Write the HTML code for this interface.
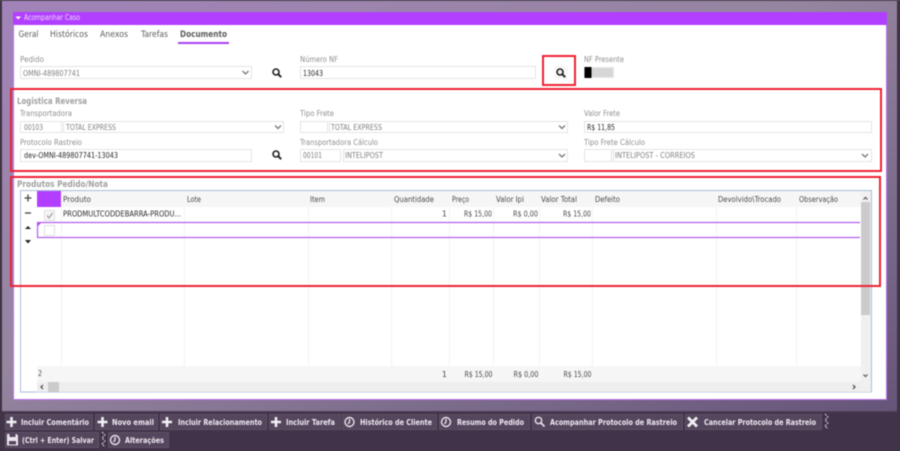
<!DOCTYPE html>
<html lang="pt">
<head>
<meta charset="utf-8">
<title>Acompanhar Caso</title>
<style>
html,body{margin:0;padding:0;width:900px;height:451px;overflow:hidden;background:#3f3345}
svg{display:block;filter:blur(.45px)}
text{font-family:"DejaVu Sans","Liberation Sans",sans-serif;font-size:8px;fill:#8c8c8c;white-space:pre}
.lb{fill:#8f8f8f}
.v{fill:#808080}
.d{fill:#2a2a2a}
.h{fill:#4a4a4a}
.t{fill:#5c5c5c;font-size:9px}
.b{fill:#a0a0a0;font-size:9px;font-weight:bold}
.w{fill:#efe9f2;font-weight:bold}
.in{fill:#fff;stroke:#e4e4e4}
.gl{stroke:#f3f3f3;stroke-width:1}
.btn{fill:#54465c;stroke:#5f5267}
.red{fill:none;stroke:#ee2233;stroke-width:2}
.ch{fill:none;stroke:#777;stroke-width:1.300}
.ic{fill:none;stroke:#e8e2ec;stroke-width:1.400}
.zz{fill:none;stroke:#d8d3dc;stroke-width:1;stroke-dasharray:2 1}
</style>
</head>
<body>
<svg width="900" height="451" viewBox="0 0 900 451" xmlns="http://www.w3.org/2000/svg">
<defs>
<linearGradient id="bg" x1="0" y1="0" x2="1" y2="1">
<stop offset="0" stop-color="#a283ba"/><stop offset=".45" stop-color="#95859f"/><stop offset="1" stop-color="#66557a"/>
</linearGradient>
<g id="s"><circle cx="-1" cy="-1" r="3" fill="none" stroke="#222" stroke-width="1.600"/><path d="M1.200 1.200L4.200 4.200" stroke="#222" stroke-width="2"/></g>
<path id="chev" class="ch" d="M-3-1.500L0 1.500L3-1.500"/>
<g id="plus"><path d="M-5 0H5M0-5V5" stroke="#f2eff4" stroke-width="2.600"/></g>
<g id="clock"><circle r="4.500" class="ic"/><path class="ic" d="M0-3V0L-1.500 2"/></g>
</defs>

<rect width="900" height="451" fill="#3f3345"/>
<rect x="2" y="1" width="895" height="411" fill="url(#bg)"/>
<rect y="0" width="900" height="1" fill="#5a5060"/>

<!-- panel -->
<rect x="13.500" y="12.500" width="873" height="387" fill="#fff" stroke="#bd72f0"/>
<rect x="13" y="12" width="874" height="13" fill="#b23fff"/>
<path d="M15.500 16.500H21L18.200 19.500Z" fill="#fff"/>
<text x="24" y="20" style="font-size:7.500px;fill:#ecdcfa" textLength="56" lengthAdjust="spacingAndGlyphs">Acompanhar Caso</text>

<!-- tabs -->
<text class="t" x="18.500" y="37" textLength="20" lengthAdjust="spacingAndGlyphs">Geral</text>
<text class="t" x="50" y="37" textLength="38" lengthAdjust="spacingAndGlyphs">Históricos</text>
<text class="t" x="100" y="37" textLength="28" lengthAdjust="spacingAndGlyphs">Anexos</text>
<text class="t" x="141" y="37" textLength="27" lengthAdjust="spacingAndGlyphs">Tarefas</text>
<text class="t" x="180" y="37" textLength="47" lengthAdjust="spacingAndGlyphs" style="font-weight:bold">Documento</text>
<rect x="178" y="42" width="51" height="2" fill="#a93ff0"/>

<!-- row 1 -->
<text class="lb" x="20" y="62" textLength="24" lengthAdjust="spacingAndGlyphs">Pedido</text>
<rect class="in" x="20.500" y="66.500" width="231" height="12"/>
<text class="v" x="23" y="76" textLength="57" lengthAdjust="spacingAndGlyphs">OMNI-489807741</text>
<use href="#chev" x="245.500" y="72.500"/>
<use href="#s" x="277" y="73"/>

<text class="lb" x="300" y="62" textLength="38" lengthAdjust="spacingAndGlyphs">Número NF</text>
<rect class="in" x="300.500" y="66.500" width="235" height="12"/>
<text class="d" x="303" y="76" textLength="20" lengthAdjust="spacingAndGlyphs">13043</text>

<rect x="555" y="66" width="13" height="13" fill="#f7f7f7"/>
<use href="#s" x="561" y="73"/>
<rect class="red" x="543" y="56" width="32" height="29"/>

<text class="lb" x="584" y="62" textLength="40" lengthAdjust="spacingAndGlyphs">NF Presente</text>
<rect x="584.500" y="67.500" width="29" height="10" fill="#d6d6d6" stroke="#e8e8e8"/>
<rect x="584.500" y="67" width="7" height="11" fill="#000"/>

<!-- logistica -->
<rect class="red" x="11" y="89" width="870" height="82"/>
<text class="b" x="17" y="104" textLength="70" lengthAdjust="spacingAndGlyphs">Logistica Reversa</text>

<text class="lb" x="20" y="116" textLength="52" lengthAdjust="spacingAndGlyphs">Transportadora</text>
<rect class="in" x="20.500" y="121.500" width="41" height="11"/>
<text class="v" x="24" y="130" textLength="19" lengthAdjust="spacingAndGlyphs">00103</text>
<rect class="in" x="63.500" y="121.500" width="220" height="11"/>
<text class="v" x="66" y="130" textLength="50" lengthAdjust="spacingAndGlyphs">TOTAL EXPRESS</text>
<use href="#chev" x="278" y="127"/>

<text class="lb" x="20" y="145" textLength="62" lengthAdjust="spacingAndGlyphs">Protocolo Rastreio</text>
<rect class="in" x="20.500" y="149.500" width="231" height="12"/>
<text class="d" x="24" y="158" textLength="94" lengthAdjust="spacingAndGlyphs">dev-OMNI-489807741-13043</text>
<use href="#s" x="277" y="155"/>

<text class="lb" x="300" y="116" textLength="34" lengthAdjust="spacingAndGlyphs">Tipo Frete</text>
<rect class="in" x="300.500" y="121.500" width="27" height="11"/>
<rect class="in" x="329.500" y="121.500" width="238" height="11"/>
<text class="v" x="331" y="130" textLength="51" lengthAdjust="spacingAndGlyphs">TOTAL EXPRESS</text>
<use href="#chev" x="562" y="127"/>

<text class="lb" x="300" y="145" textLength="78" lengthAdjust="spacingAndGlyphs">Transportadora Cálculo</text>
<rect class="in" x="300.500" y="149.500" width="40" height="12"/>
<text class="v" x="303" y="158" textLength="19" lengthAdjust="spacingAndGlyphs">00101</text>
<rect class="in" x="343.500" y="149.500" width="224" height="12"/>
<text class="v" x="345" y="158" textLength="38" lengthAdjust="spacingAndGlyphs">INTELIPOST</text>
<use href="#chev" x="562" y="155.500"/>

<text class="lb" x="584" y="116" textLength="36" lengthAdjust="spacingAndGlyphs">Valor Frete</text>
<rect class="in" x="584.500" y="121.500" width="287" height="11"/>
<text class="d" x="587" y="130" textLength="28" lengthAdjust="spacingAndGlyphs">R$ 11,85</text>

<text class="lb" x="584" y="145" textLength="61" lengthAdjust="spacingAndGlyphs">Tipo Frete Cálculo</text>
<rect class="in" x="584.500" y="149.500" width="27" height="12"/>
<rect class="in" x="613.500" y="149.500" width="258" height="12"/>
<text class="v" x="615" y="158" textLength="80" lengthAdjust="spacingAndGlyphs">INTELIPOST - CORREIOS</text>
<use href="#chev" x="865" y="155.500"/>

<!-- produtos -->
<text class="b" x="17" y="187" textLength="91" lengthAdjust="spacingAndGlyphs">Produtos Pedido/Nota</text>

<rect x="20.500" y="190.500" width="851" height="201.500" fill="#fff" stroke="#a9c0d8"/>
<rect x="37" y="191" width="824" height="16" fill="#f6f6f6"/>
<rect x="37" y="191" width="24" height="16" fill="#b23fff"/>

<path class="gl" d="M61.500 207V366M184.500 207V366M308.500 207V366M391.500 207V366M449.500 207V366M493.500 207V366M539.500 207V366M592.500 207V366M716.500 207V366M796.500 207V366"/>

<text class="h" x="63" y="202" textLength="28" lengthAdjust="spacingAndGlyphs">Produto</text>
<text class="h" x="187" y="202" textLength="14" lengthAdjust="spacingAndGlyphs">Lote</text>
<text class="h" x="310" y="202" textLength="15" lengthAdjust="spacingAndGlyphs">Item</text>
<text class="h" x="394" y="202" textLength="40" lengthAdjust="spacingAndGlyphs">Quantidade</text>
<text class="h" x="452" y="202" textLength="17" lengthAdjust="spacingAndGlyphs">Preço</text>
<text class="h" x="496" y="202" textLength="28" lengthAdjust="spacingAndGlyphs">Valor Ipi</text>
<text class="h" x="541" y="202" textLength="36" lengthAdjust="spacingAndGlyphs">Valor Total</text>
<text class="h" x="595" y="202" textLength="25" lengthAdjust="spacingAndGlyphs">Defeito</text>
<text class="h" x="718" y="202" textLength="63" lengthAdjust="spacingAndGlyphs">Devolvido\Trocado</text>
<text class="h" x="799" y="202" textLength="39" lengthAdjust="spacingAndGlyphs">Observação</text>

<text class="d" x="63" y="216.500" textLength="118" lengthAdjust="spacingAndGlyphs">PRODMULTCODDEBARRA-PRODU...</text>
<text class="h" x="447" y="216.500" text-anchor="end">1</text>
<text class="h" x="464" y="216.500" textLength="28" lengthAdjust="spacingAndGlyphs">R$ 15,00</text>
<text class="h" x="513" y="216.500" textLength="25" lengthAdjust="spacingAndGlyphs">R$ 0,00</text>
<text class="h" x="563" y="216.500" textLength="28" lengthAdjust="spacingAndGlyphs">R$ 15,00</text>

<rect x="44.500" y="210.500" width="10" height="10" fill="#f6f6f6" stroke="#e0e0e0"/>
<path d="M47 215.500L49 218L52.500 213" fill="none" stroke="#999" stroke-width="1.100"/>

<rect x="37.500" y="222.500" width="822" height="15" fill="#fff" stroke="none"/>
<path class="gl" d="M61.500 223V237M184.500 223V237M308.500 223V237M391.500 223V237M449.500 223V237M493.500 223V237M539.500 223V237M592.500 223V237M716.500 223V237M796.500 223V237"/>
<path d="M37 222.500H860M37 237.500H860M37.500 222V238" stroke="#b45ff0" stroke-width="1.200" fill="none"/>
<path d="M38 223H41L38 226Z" fill="#b23fff"/>
<rect x="44.500" y="225.500" width="10" height="10" fill="#fff" stroke="#e0e0e0"/>

<!-- left grid controls -->
<path d="M24.500 198H31.500M28 194.500V201.500" stroke="#444" stroke-width="1.300"/>
<path d="M25 213H31" stroke="#444" stroke-width="1.300"/>
<path d="M25 229H31L28 226Z" fill="#222"/>
<path d="M25 240H31L28 243.500Z" fill="#222"/>

<!-- scrollbars -->
<rect x="861" y="191" width="10" height="191" fill="#f0f0f0"/>
<rect x="861" y="202" width="9" height="113" fill="#cbcbcb"/>
<path d="M863.500 199.500L865.500 197.500L867.500 199.500" fill="none" stroke="#555" stroke-width="1.200"/>
<path d="M863.500 374.500L865.500 376.500L867.500 374.500" fill="none" stroke="#555" stroke-width="1.200"/>

<rect x="37" y="366" width="824" height="16" fill="#f6f6f6"/>
<text class="h" x="38" y="376" textLength="4" lengthAdjust="spacingAndGlyphs">2</text>
<text class="h" x="447" y="377" text-anchor="end">1</text>
<text class="h" x="464.500" y="377" textLength="28" lengthAdjust="spacingAndGlyphs">R$ 15,00</text>
<text class="h" x="513.500" y="377" textLength="25" lengthAdjust="spacingAndGlyphs">R$ 0,00</text>
<text class="h" x="563.500" y="377" textLength="28" lengthAdjust="spacingAndGlyphs">R$ 15,00</text>

<rect x="37" y="382" width="834" height="10" fill="#eeeeee"/>
<rect x="48" y="382" width="11" height="10" fill="#cbcbcb"/>
<path d="M43 385L41 387L43 389" fill="none" stroke="#444" stroke-width="1.200"/>
<path d="M853 385L855 387L853 389" fill="none" stroke="#444" stroke-width="1.200"/>
<rect x="861" y="382" width="10" height="10" fill="#f0f0f0"/>

<!-- red box 2 -->
<rect class="red" x="11" y="177" width="869" height="109"/>

<!-- toolbar -->
<rect x="2" y="412" width="895" height="39" fill="#41344a"/>
<rect x="2" y="411" width="895" height="1" fill="#4f4157"/>

<rect class="btn" x="5.500" y="414.500" width="87" height="15"/>
<use href="#plus" x="11.500" y="422"/>
<text class="w" x="21" y="425" textLength="68" lengthAdjust="spacingAndGlyphs">Incluir Comentário</text>

<rect class="btn" x="95.500" y="414.500" width="62" height="15"/>
<use href="#plus" x="102.500" y="422"/>
<text class="w" x="112" y="425" textLength="42" lengthAdjust="spacingAndGlyphs">Novo email</text>

<rect class="btn" x="160.500" y="414.500" width="106" height="15"/>
<use href="#plus" x="167" y="422"/>
<text class="w" x="178" y="425" textLength="84" lengthAdjust="spacingAndGlyphs">Incluir Relacionamento</text>

<rect class="btn" x="269.500" y="414.500" width="71" height="15"/>
<use href="#plus" x="276" y="422"/>
<text class="w" x="286" y="425" textLength="49" lengthAdjust="spacingAndGlyphs">Incluir Tarefa</text>

<rect class="btn" x="342.500" y="414.500" width="94" height="15"/>
<use href="#clock" x="349.500" y="422"/>
<text class="w" x="360" y="425" textLength="72" lengthAdjust="spacingAndGlyphs">Histórico de Cliente</text>

<rect class="btn" x="439.500" y="414.500" width="90" height="15"/>
<use href="#clock" x="446" y="422"/>
<text class="w" x="457" y="425" textLength="67" lengthAdjust="spacingAndGlyphs">Resumo do Pedido</text>

<rect class="btn" x="532.500" y="414.500" width="150" height="15"/>
<circle cx="538.500" cy="420.500" r="3.200" class="ic"/>
<path class="ic" d="M541 423L544.500 426.500" style="stroke-width:1.800"/>
<text class="w" x="550" y="425" textLength="127" lengthAdjust="spacingAndGlyphs">Acompanhar Protocolo de Rastreio</text>

<rect class="btn" x="685.500" y="414.500" width="136" height="15"/>
<path d="M688 417.500L697 426.500M697 417.500L688 426.500" stroke="#f2eff4" stroke-width="2.800"/>
<text class="w" x="704" y="425" textLength="112" lengthAdjust="spacingAndGlyphs">Cancelar Protocolo de Rastreio</text>

<path class="zz" d="M825 414L828 417L825 420L828 423L825 426L828 429"/>

<rect class="btn" x="5.500" y="432.500" width="93" height="15"/>
<path d="M7 434H16.500L18 435.500V445.500H7Z" fill="#ece7ef"/>
<rect x="9.500" y="434" width="6" height="3" fill="#54465c"/>
<rect x="9" y="441" width="7" height="3.500" fill="#54465c"/>
<text class="w" x="22" y="443" textLength="72" lengthAdjust="spacingAndGlyphs">(Ctrl + Enter) Salvar</text>

<path class="zz" d="M102 432L105 435L102 438L105 441L102 444L105 447"/>

<rect class="btn" x="108.500" y="432.500" width="60" height="15"/>
<use href="#clock" x="115" y="440"/>
<text class="w" x="125" y="443" textLength="39" lengthAdjust="spacingAndGlyphs">Alterações</text>
</svg>
</body>
</html>
